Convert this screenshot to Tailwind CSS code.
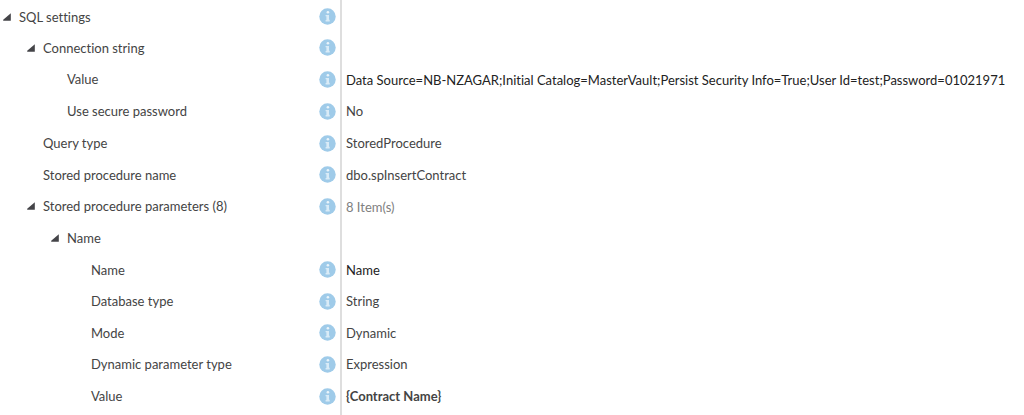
<!DOCTYPE html>
<html lang="en">
<head>
    <meta charset="UTF-8">
    <meta name="viewport" content="width=device-width, initial-scale=1.0">
    <title>SQL settings</title>
    <script src="https://cdn.jsdelivr.net/npm/@tailwindcss/browser@4"></script>
</head>
<body class="bg-white min-h-screen font-['Segoe_UI','Lato','Open_Sans',sans-serif] [font-variant-ligatures:none] text-[13px] leading-5 text-[#444444]">
    <!-- shared icons -->
    <svg class="hidden">
        <symbol id="info" viewBox="0 0 17 17">
            <circle cx="8.5" cy="8.5" r="8.2" fill="#9fcbe9"/>
            <circle cx="8.9" cy="4.2" r="1.3" fill="#eaf4fb"/>
            <path d="M6.600 6.900h3.400v4.900h.7v1.700H6.600v-1.500h.8V8.300h-.8z" fill="#d9ebf7"/>
        </symbol>
        <symbol id="open" viewBox="0 0 8 8">
            <path d="M7.800.3v7.400H.2v-1z" fill="#444448"/>
        </symbol>
    </svg>

    <table class="w-full min-h-screen table-fixed border-collapse">
        <colgroup>
            <col class="w-[341px]">
            <col>
        </colgroup>
        <tbody>
            <tr class="h-8">
                <th class="p-0 pt-px font-normal border-r-2 border-[#dedede]">
                    <div class="flex items-center pl-[3px] pr-1">
                        <button class="w-4 shrink-0" aria-label="Collapse SQL settings"><svg class="size-2"><use href="#open"/></svg></button>
                        <span class="grow text-left">SQL settings</span>
                        <button aria-label="About SQL settings"><svg class="size-[17px] block"><use href="#info"/></svg></button>
                    </div>
                </th>
                <td class="p-0 pl-1"></td>
            </tr>
            <tr class="h-[31px]">
                <th class="p-0 font-normal border-r-2 border-[#dedede]">
                    <div class="flex items-center pl-[27px] pr-1">
                        <button class="w-4 shrink-0" aria-label="Collapse Connection string"><svg class="size-2"><use href="#open"/></svg></button>
                        <span class="grow text-left">Connection string</span>
                        <button aria-label="About Connection string"><svg class="size-[17px] block"><use href="#info"/></svg></button>
                    </div>
                </th>
                <td class="p-0 pl-1"></td>
            </tr>
            <tr class="h-8">
                <th class="p-0 font-normal border-r-2 border-[#dedede]">
                    <div class="flex items-center pl-[67px] pr-1">
                        <span class="grow text-left">Value</span>
                        <button aria-label="About Value"><svg class="size-[17px] block"><use href="#info"/></svg></button>
                    </div>
                </th>
                <td class="p-0 pl-1 pt-px text-[#222222] whitespace-nowrap">Data Source=NB-NZAGAR;Initial Catalog=MasterVault;Persist Security Info=True;User Id=test;Password=01021971</td>
            </tr>
            <tr class="h-8">
                <th class="p-0 font-normal border-r-2 border-[#dedede]">
                    <div class="flex items-center pl-[67px] pr-1">
                        <span class="grow text-left">Use secure password</span>
                        <button aria-label="About Use secure password"><svg class="size-[17px] block"><use href="#info"/></svg></button>
                    </div>
                </th>
                <td class="p-0 pl-1">No</td>
            </tr>
            <tr class="h-8">
                <th class="p-0 font-normal border-r-2 border-[#dedede]">
                    <div class="flex items-center pl-[43px] pr-1">
                        <span class="grow text-left">Query type</span>
                        <button aria-label="About Query type"><svg class="size-[17px] block"><use href="#info"/></svg></button>
                    </div>
                </th>
                <td class="p-0 pl-1">StoredProcedure</td>
            </tr>
            <tr class="h-[31px]">
                <th class="p-0 font-normal border-r-2 border-[#dedede]">
                    <div class="flex items-center pl-[43px] pr-1">
                        <span class="grow text-left">Stored procedure name</span>
                        <button aria-label="About Stored procedure name"><svg class="size-[17px] block"><use href="#info"/></svg></button>
                    </div>
                </th>
                <td class="p-0 pl-1">dbo.spInsertContract</td>
            </tr>
            <tr class="h-8">
                <th class="p-0 font-normal border-r-2 border-[#dedede]">
                    <div class="flex items-center pl-[27px] pr-1">
                        <button class="w-4 shrink-0" aria-label="Collapse Stored procedure parameters"><svg class="size-2"><use href="#open"/></svg></button>
                        <span class="grow text-left">Stored procedure parameters (8)</span>
                        <button aria-label="About Stored procedure parameters"><svg class="size-[17px] block"><use href="#info"/></svg></button>
                    </div>
                </th>
                <td class="p-0 pl-1 pt-px text-[#808080]">8 Item(s)</td>
            </tr>
            <tr class="h-8">
                <th class="p-0 font-normal border-r-2 border-[#dedede]">
                    <div class="flex items-center pl-[51px] pr-1">
                        <button class="w-4 shrink-0" aria-label="Collapse Name"><svg class="size-2"><use href="#open"/></svg></button>
                        <span class="grow text-left">Name</span>
                    </div>
                </th>
                <td class="p-0 pl-1"></td>
            </tr>
            <tr class="h-[31px]">
                <th class="p-0 font-normal border-r-2 border-[#dedede]">
                    <div class="flex items-center pl-[91px] pr-1">
                        <span class="grow text-left">Name</span>
                        <button aria-label="About Name"><svg class="size-[17px] block"><use href="#info"/></svg></button>
                    </div>
                </th>
                <td class="p-0 pl-1 text-[#222222]">Name</td>
            </tr>
            <tr class="h-8">
                <th class="p-0 font-normal border-r-2 border-[#dedede]">
                    <div class="flex items-center pl-[91px] pr-1">
                        <span class="grow text-left">Database type</span>
                        <button aria-label="About Database type"><svg class="size-[17px] block"><use href="#info"/></svg></button>
                    </div>
                </th>
                <td class="p-0 pl-1">String</td>
            </tr>
            <tr class="h-[31px]">
                <th class="p-0 font-normal border-r-2 border-[#dedede]">
                    <div class="flex items-center pl-[91px] pr-1">
                        <span class="grow text-left">Mode</span>
                        <button aria-label="About Mode"><svg class="size-[17px] block"><use href="#info"/></svg></button>
                    </div>
                </th>
                <td class="p-0 pl-1">Dynamic</td>
            </tr>
            <tr class="h-8">
                <th class="p-0 font-normal border-r-2 border-[#dedede]">
                    <div class="flex items-center pl-[91px] pr-1">
                        <span class="grow text-left">Dynamic parameter type</span>
                        <button aria-label="About Dynamic parameter type"><svg class="size-[17px] block"><use href="#info"/></svg></button>
                    </div>
                </th>
                <td class="p-0 pl-1">Expression</td>
            </tr>
            <tr class="h-[35px]">
                <th class="p-0 pb-[3px] font-normal border-r-2 border-[#dedede]">
                    <div class="flex items-center pl-[91px] pr-1">
                        <span class="grow text-left">Value</span>
                        <button aria-label="About parameter Value"><svg class="size-[17px] block"><use href="#info"/></svg></button>
                    </div>
                </th>
                <td class="p-0 pl-1 pb-[3px] font-bold">{Contract Name}</td>
            </tr>
        </tbody>
    </table>
</body>
</html>
